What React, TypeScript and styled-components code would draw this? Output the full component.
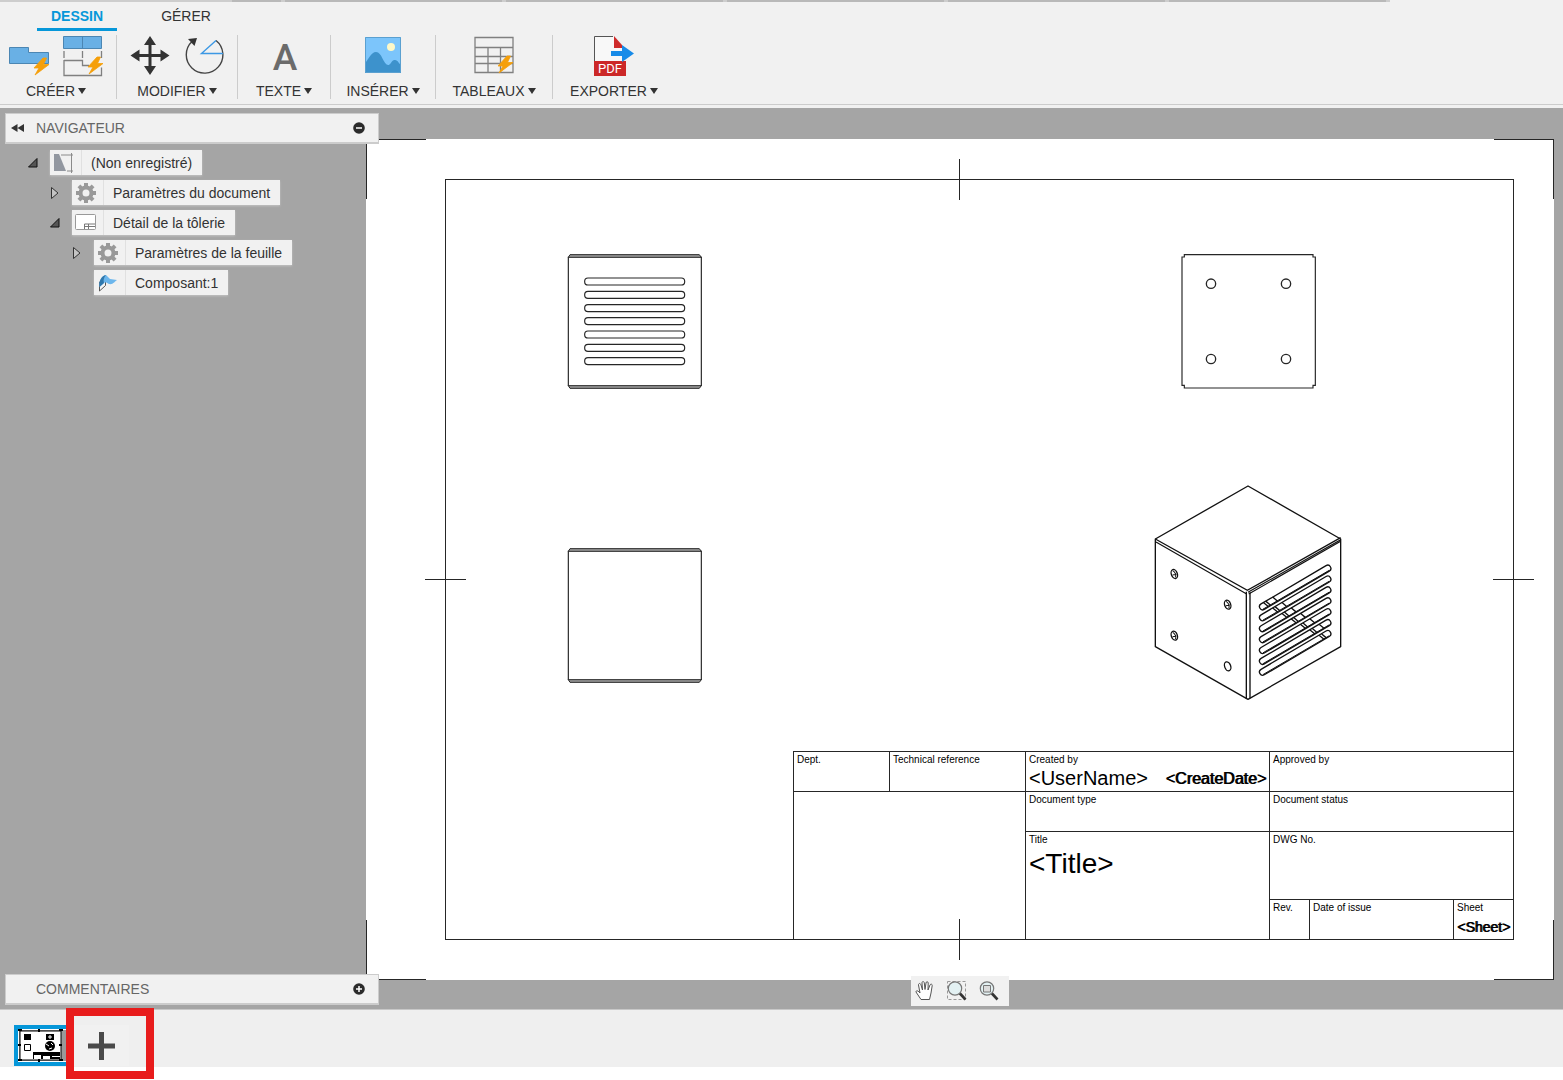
import React from "react";
import styled, { createGlobalStyle, css } from "styled-components";

const INK = "#262626";
const CHROME = "#f1f1f1";
const CANVAS = "#a5a5a5";
const BLUE = "#0697d9";

const GlobalStyle = createGlobalStyle`
  *, *::before, *::after { box-sizing: border-box; }
  body {
    margin: 0;
    background: #fff;
    font-family: "Liberation Sans", Arial, sans-serif;
    font-size: 14px;
    line-height: 20px;
    color: #333;
  }
  button { font: inherit; color: inherit; border: 0; padding: 0; background: none; cursor: pointer; }
  svg { display: block; }
`;

const Page = styled.div`
  display: flex;
  flex-direction: column;
  min-height: 100vh;
  padding-bottom: 13px;
`;

/* ---------- Header ---------- */

const Header = styled.header`
  display: flex;
  flex-direction: column;
  height: 108px;
  background: ${CHROME};
`;

const FileStrip = styled.div`
  display: flex;
  gap: 4px;
  align-self: flex-start;
  height: 2px;
  padding: 0 4px 0 232px;
  background: #cdcdcd;
`;

const FileEdge = styled.span<{ $w: number }>`
  width: ${(p) => p.$w}px;
  background: #b9b9b9;
`;

const Tabs = styled.nav`
  display: flex;
  gap: 30px;
  height: 29px;
  padding-left: 37px;
`;

const Tab = styled.button<{ $active?: boolean }>`
  padding: 4px 14px 2px;
  border-bottom: 3px solid transparent;
  ${(p) =>
    p.$active &&
    css`
      color: ${BLUE};
      font-weight: bold;
      border-bottom-color: ${BLUE};
    `}
`;

const Ribbon = styled.div`
  display: flex;
  height: 74px;
  padding-top: 4px;
  border-bottom: 1px solid #ccc;
`;

const Group = styled.section<{ $w: number; $pad?: number }>`
  display: flex;
  flex-direction: column;
  align-items: center;
  width: ${(p) => p.$w}px;
  height: 64px;
  padding-right: ${(p) => p.$pad ?? 0}px;
  border-right: 1px solid #ccc;
  &:last-child { border-right: 0; }
`;

const Tools = styled.div`
  display: flex;
  flex: none;
  align-items: flex-start;
  gap: 14px;
  height: 46px;
`;

const Menu = styled.button`
  display: flex;
  flex: none;
  align-items: center;
  gap: 3px;
  height: 20px;
  white-space: nowrap;
  &::after {
    content: "";
    border: 4px solid transparent;
    border-top: 6px solid #333;
    border-bottom: 0;
  }
`;

/* ---------- Workspace ---------- */

const Workspace = styled.main`
  display: grid;
  grid-template-columns: 366px 1fr;
  flex: 1;
  background: ${CANVAS};
  border-bottom: 1px solid #c8c8c8;
`;

const Side = styled.aside`
  display: flex;
  flex-direction: column;
  justify-content: space-between;
  padding: 5px 0 4px 5px;
  z-index: 1;
`;

const PanelBar = styled.header`
  display: flex;
  align-items: center;
  width: 374px;
  height: 31px;
  padding: 0 13px 0 5px;
  background: ${CHROME};
  border: 1px solid #ccc;
  border-width: 1px 1px 2px;
  color: #666;
`;

const PanelTitle = styled.h2`
  flex: 1;
  margin: 0;
  font-size: 14px;
  font-weight: normal;
`;

const PanelSlot = styled.span`
  width: 25px;
`;

const Tree = styled.ul`
  display: flex;
  flex-direction: column;
  gap: 5px;
  margin: 0;
  padding: 6px 0 0 23px;
  list-style: none;
`;

const TreeRow = styled.li<{ $level: number }>`
  display: flex;
  align-items: center;
  padding-left: ${(p) => p.$level * 22}px;
`;

const Toggle = styled.span`
  display: flex;
  flex: none;
  width: 22px;
`;

const TreeItem = styled.button`
  display: flex;
  height: 25px;
  background: ${CHROME};
  box-shadow: 0 1px 2px #c4c4c4;
`;

const TreeIcon = styled.span`
  display: flex;
  align-items: center;
  justify-content: center;
  width: 32px;
  height: 25px;
  padding-right: 4px;
  border-right: 1px solid #e0e0e0;
`;

const TreeText = styled.span`
  padding: 3px 10px 2px 9px;
  white-space: nowrap;
`;

const Board = styled.div`
  display: flex;
  position: relative;
  padding: 31px 9px 29px 0;
`;

const Sheet = styled.div`
  display: flex;
  flex: 1;
  position: relative;
  padding: 40px 40px 40px 79px;
  background: #fff;
`;

const Corner = styled.span<{ $v: "top" | "bottom"; $h: "left" | "right" }>`
  position: absolute;
  ${(p) => p.$v}: 0;
  ${(p) => p.$h}: 0;
  width: 60px;
  height: 60px;
  border: 0 solid ${INK};
  border-${(p) => p.$v}-width: 1px;
  border-${(p) => p.$h}-width: 1px;
`;

const CenterMarkV = styled.span<{ $edge: "top" | "bottom" }>`
  position: absolute;
  left: calc(50% - 1px);
  ${(p) => p.$edge}: 20px;
  width: 1px;
  height: 41px;
  background: ${INK};
`;

const CenterMarkH = styled.span<{ $edge: "left" | "right"; $inset: number }>`
  position: absolute;
  top: 440px;
  ${(p) => p.$edge}: ${(p) => p.$inset}px;
  width: 41px;
  height: 1px;
  background: ${INK};
`;

const Frame = styled.div`
  display: flex;
  flex: 1;
  align-items: flex-end;
  justify-content: flex-end;
  border: 1px solid ${INK};
`;

const View = styled.svg<{ $x: number; $y: number }>`
  position: absolute;
  left: ${(p) => p.$x}px;
  top: ${(p) => p.$y}px;
`;

const TitleBlock = styled.div`
  display: grid;
  grid-template-columns: 96px 136px 244px 40px 144px 60px;
  grid-template-rows: 40px 40px 68px 40px;
  color: #000;
`;

const Cell = styled.div<{ $area: string }>`
  grid-area: ${(p) => p.$area};
  padding: 2px 3px;
  border-top: 1px solid ${INK};
  border-left: 1px solid ${INK};
  white-space: nowrap;
`;

const Caption = styled.div`
  font-size: 10px;
  line-height: 12px;
`;

const Values = styled.div`
  display: flex;
  justify-content: space-between;
`;

const Value = styled.span<{ $size: number }>`
  font-size: ${(p) => p.$size}px;
  line-height: ${(p) => (p.$size > 20 ? 36 : 24)}px;
`;

const HeavyValue = styled(Value)`
  display: block;
  padding-top: 1px;
  text-shadow: 1px 0 0 #000;
`;

const ViewBar = styled.div`
  position: absolute;
  bottom: 3px;
  left: calc(50% - 54px);
  display: flex;
  gap: 12px;
  padding: 5px 10px 5px 4px;
  height: 30px;
  background: ${CHROME};
`;

/* ---------- Footer ---------- */

const Footer = styled.footer`
  display: flex;
  align-items: center;
  height: 57px;
  padding: 14px 0 0 14px;
  background: #efefef;
`;

const SheetThumb = styled.button`
  width: 52px;
  height: 41px;
  border: 4px solid ${BLUE};
  border-right-width: 0;
  background: #fff;
`;

const AddSheet = styled.div`
  position: relative;
  display: flex;
  height: 41px;
  &::after {
    content: "";
    position: absolute;
    top: -17px;
    left: 0;
    width: 88px;
    height: 71px;
    border: 8px solid #e81c1c;
    pointer-events: none;
  }
`;

const AddButton = styled.button`
  display: flex;
  align-items: center;
  width: 63px;
  padding-left: 22px;
  background: ${CHROME};
`;

/* ---------- Icons ---------- */

const Bolt = ({ x, y }: { x: number; y: number }) => (
  <path
    transform={`translate(${x} ${y})`}
    d="M9 0 L0 10 H5 L1 17 L15 6.500 H9.500 L12.500 0Z"
    fill="#f59f0a"
    stroke="#f59f0a"
    strokeWidth="0.8"
  />
);

const BaseViewIcon = () => (
  <svg width="40" height="42" viewBox="0 0 40 42">
    <path d="M.5 12.5h19v5h20v11h-39z" fill="#69b0e5" stroke="#4b86b3" />
    <Bolt x={25} y={23} />
  </svg>
);

const ProjectedViewIcon = () => (
  <svg width="40" height="42" viewBox="0 0 40 42">
    <path d="M.5 1.500h38v12h-38zM19.500 1.500v12" fill="#69b0e5" stroke="#4b86b3" />
    <path d="M1 16v7M19.500 16v7M38.500 16v7M1 25.500h18.500v5H26M1 25v15.500h37.500v-8" fill="none" stroke="#808080" strokeWidth="1.300" />
    <Bolt x={25} y={22} />
  </svg>
);

const MoveIcon = () => (
  <svg width="40" height="42" viewBox="0 0 40 42">
    <path
      d="M20 1l6 9h-4.500v9h9v-4.500l9 6-9 6V22h-9v9H26l-6 9-6-9h4.500v-9h-9v4.500l-9-6 9-6V19h9v-9H14z"
      fill="#333"
    />
  </svg>
);

const RotateIcon = () => (
  <svg width="40" height="42" viewBox="0 0 40 42">
    <path d="M32 5.500A18.300 18.300 0 1 1 8 6.500" fill="none" stroke="#444" strokeWidth="1.400" />
    <path d="M32 5.500L17.500 18.500H39" fill="none" stroke="#3c98e4" strokeWidth="1.400" />
    <path d="M4 4l9-1-2.500 8z" fill="#333" />
  </svg>
);

const TextIcon = () => (
  <svg width="40" height="46" viewBox="0 0 40 46">
    <text x="21" y="35" textAnchor="middle" fontFamily="Roboto, sans-serif" fontSize="37" fontWeight="500" fill="#6b6b6b">A</text>
  </svg>
);

const ImageIcon = () => (
  <svg width="36" height="42" viewBox="0 0 36 42">
    <path d="M0 2h36v36H0z" fill="#7cc5fb" />
    <circle cx="26" cy="12" r="4" fill="#fdf8c8" />
    <path d="M0 28c4-4 6-11 11-11 6 0 7 12 12 13 3 0 4-6 7-5 3 0 4 4 6 5v8H0z" fill="#3d92cc" />
    <path d="M.5 2.500h35v35H.5z" fill="none" stroke="#5aa0d0" />
  </svg>
);

const TableIcon = () => (
  <svg width="40" height="42" viewBox="0 0 40 42">
    <path d="M1 2.500h38v35H1zM1 12.500h38M1 21.500h38M1 28.500h38M14 12.500v25M26.500 12.500v25" fill="none" stroke="#808080" strokeWidth="1.300" />
    <Bolt x={24} y={21} />
  </svg>
);

const PdfIcon = () => (
  <svg width="40" height="42" viewBox="0 0 40 42">
    <path d="M.5 26V1.500H19L28 11v15z" fill="#f8f8f8" />
    <path d="M.5 26V1.500H19" fill="none" stroke="#555" />
    <path d="M20 1l8 9v3h-8z" fill="#cf2b2b" />
    <path d="M0 26h32v15H0z" fill="#cc2828" />
    <text x="4" y="38" fontFamily="Roboto, sans-serif" fontSize="13" fill="#fff">PDF</text>
    <path d="M17 16h11v-6l12 8.500L28 27v-6H17z" fill="#188be8" />
  </svg>
);

const CollapseIcon = () => (
  <svg width="14" height="10" viewBox="0 0 14 10">
    <path d="M6.500 1v8L0 5zM13 1v8L6.500 5z" fill="#333" />
  </svg>
);

const RoundIcon = ({ plus }: { plus?: boolean }) => (
  <svg width="12" height="12" viewBox="0 0 12 12">
    <circle cx="6" cy="6" r="5.800" fill="#2b2b2b" />
    <path d={plus ? "M3 6h6M6 3v6" : "M3 6h6"} stroke="#fff" strokeWidth="1.500" />
  </svg>
);

const OpenArrow = () => (
  <svg width="10" height="10" viewBox="0 0 10 10">
    <path d="M9 .5v8.500H.5z" fill="#555" stroke="#111" />
  </svg>
);

const ClosedArrow = () => (
  <svg width="10" height="12" viewBox="0 0 10 12">
    <path d="M1.500 .5v11L8 6z" fill="#c4c4c4" stroke="#333" />
  </svg>
);

const GearIcon = () => (
  <svg width="20" height="20" viewBox="-10 -10 20 20">
    {[0, 45, 90, 135].map((a) => (
      <path key={a} d="M-2-10h4V10h-4z" transform={`rotate(${a})`} fill="#999" />
    ))}
    <circle r="5.500" fill={CHROME} stroke="#999" strokeWidth="4" />
  </svg>
);

const DocIcon = () => (
  <svg width="21" height="20" viewBox="0 0 21 20">
    <path d="M1 1h5l7 17H1z" fill="#9297a0" />
    <path d="M8 2h12M14 18h6M18.500 0v20" stroke="#8b8b8b" fill="none" />
  </svg>
);

const SheetIcon = () => (
  <svg width="21" height="17" viewBox="0 0 21 17">
    <rect x=".5" y=".5" width="20" height="15" rx="1" fill="#fff" stroke="#999" />
    <path d="M9.500 15v-5H20M9.500 12.500H20M13.500 10v5" fill="none" stroke="#777" />
  </svg>
);

const FlangeIcon = () => (
  <svg width="20" height="18" viewBox="0 0 20 18">
    <path d="M1.500 8v9l6-5.500V6z" fill="#f6f6f6" stroke="#555" />
    <path d="M1.500 13C1 7 3 2 8 1l4 4 7 1c-2 1-4 5-8 4-2-1-3-2-5-1z" fill="#6cb6ec" />
    <path d="M1.500 13C1 7 3 2 8 1c-2 2-3 5-2 8z" fill="#2f78ad" />
  </svg>
);

const HandIcon = () => (
  <svg width="20" height="20" viewBox="0 0 20 20">
    <path
      d="M6 18.500L1 11c0-2 2-1.500 4 1L3.500 4c0-2 2-2 2.500 0l1.500 5L7 2c0-2 2-2 2.300 0l.7 6.500L11 2c.2-2 2.300-1.500 2.200 0L13 9l2-5c.7-1.500 2.500-.8 2.200.6L16 12l-1.500 6.500z"
      fill="#fff"
      stroke="#555"
    />
  </svg>
);

const ZoomIcon = ({ fit }: { fit?: boolean }) => (
  <svg width="20" height="20" viewBox="0 0 20 20">
    {!fit && <path d="M.5 .5h18v18H.5z" fill="none" stroke="#999" strokeDasharray="3 2" />}
    <path d="M12.500 12l6 6.500" stroke="#333" strokeWidth="2.600" />
    <circle cx="8" cy="7.500" r="6.700" fill="#e3f1f3" stroke="#777" strokeWidth="1.200" />
    {fit && <path d="M4.500 4.500h7v6.500h-7z" fill="#ddd" stroke="#777" />}
  </svg>
);

const PlusIcon = () => (
  <svg width="27" height="28" viewBox="0 0 27 28">
    <path d="M11 0h5v11.500h11v5H16V28h-5V16.500H0v-5h11z" fill="#4a4a4a" />
  </svg>
);

const ThumbDrawing = () => (
  <svg width="48" height="33" viewBox="0 0 48 33">
    <path d="M1 1h47v31H1z" fill="#999" />
    <path d="M2 2h41v29H2z" fill="#fff" stroke="#000" />
    <path d="M6 5h7v6H6zM28 5h8v6h-8zM15 23h27v7H15z" />
    <path d="M30 8h4M32 6v4" stroke="#fff" />
    <path d="M16 26h7v4h-7zM25 27h7v3h-7zM34 27h8v1h-8z" fill="#fff" />
    <path d="M6.500 15.500h6v6h-6z" fill="#fff" stroke="#000" />
    <circle cx="32" cy="17" r="5" />
    <path d="M28 15l3 2M33 14l2 2M31 20l3-1" stroke="#fff" />
    <path d="M0 1h4M0 31h4M41 1h4M41 31h4M21 0v3M21 30v3M0 16h3M41 16h3" stroke="#000" strokeWidth="2" />
  </svg>
);

/* ---------- Drawing views ---------- */

const BoxView = ({ x, y, slots }: { x: number; y: number; slots?: boolean }) => (
  <View $x={x} $y={y} width="170" height="160" viewBox="0 0 510 480" fill="none" stroke={INK} strokeWidth="3.500">
    <path d="M55 50V438M454 50V438" />
    <path d="M55 52l5-8H448l6 8zM55 437l5 8H448l6-8z" fill="#999" strokeWidth="3" />
    {slots &&
      [125, 165, 205, 244, 284, 324, 364].map((cy) => (
        <rect key={cy} x="104" y={cy - 11} width="300" height="21" rx="10" />
      ))}
  </View>
);

const FlatView = () => (
  <View $x={799} $y={101} width="170" height="160" viewBox="0 0 510 480" fill="none" stroke={INK} strokeWidth="3.500">
    <path d="M58 44H444V51H451V436H444V444H58V436H51V51H58Z" />
    {[131, 357].map((cy) => [138, 363].map((cx) => <circle key={`${cx}-${cy}`} cx={cx} cy={cy} r="14" strokeWidth="4" />))}
  </View>
);

const IsoView = () => (
  <View $x={774} $y={336} width="220" height="235" viewBox="0 0 660 705" fill="none" stroke="#111" strokeWidth="4">
    <path d="M324 33L602 192V515L324 673L46 515V192Z" strokeLinejoin="round" />
    <path d="M46 192L322 346L602 188" />
    <path d="M48 201L320 357M326 357L602 199M324 352L602 194" strokeWidth="3.500" />
    <path d="M319 350V672M330 352V670" />
    {[0, 1, 2, 3, 4, 5, 6].map((i) => {
      const y = 395 + i * 32.700;
      const slot = `M368 ${y}L563 ${y - 115}`;
      const mark = (mx: number) => `M${mx - 5} ${y - (mx - 366) * 0.580 - 6}l12 10`;
      const a = 376 + i * 28;
      return (
        <g key={i} strokeLinecap="round">
          <path d={slot} strokeWidth="23" />
          <path d={slot} strokeWidth="15" stroke="#fff" />
          <path d={`M370 ${y + 7}L566 ${y - 108}`} strokeWidth="3" />
          <path d={mark(a)} strokeWidth="4" />
          <path d={mark(a + 7)} strokeWidth="4" />
          {i < 6 && <path d={mark(a + 28)} strokeWidth="4" />}
        </g>
      );
    })}
    {[[103, 297], [263, 389], [103, 482], [263, 574]].map(([cx, cy], i) => (
      <g key={i} transform={`translate(${cx} ${cy}) rotate(-20)`}>
        <ellipse rx="9" ry="14" />
        {i < 3 && <path d="M-1-11C4-4 4 5 0 11M-6 1l12 2" strokeWidth="3" />}
      </g>
    ))}
  </View>
);

/* ---------- Data ---------- */

const groups = [
  { label: "CRÉER", w: 117, pad: 4, tools: [BaseViewIcon, ProjectedViewIcon] },
  { label: "MODIFIER", w: 121, tools: [MoveIcon, RotateIcon] },
  { label: "TEXTE", w: 93, tools: [TextIcon] },
  { label: "INSÉRER", w: 105, tools: [ImageIcon] },
  { label: "TABLEAUX", w: 117, tools: [TableIcon] },
  { label: "EXPORTER", w: 122, tools: [PdfIcon] },
];

const tree = [
  { text: "(Non enregistré)", level: 0, arrow: OpenArrow, icon: DocIcon },
  { text: "Paramètres du document", level: 1, arrow: ClosedArrow, icon: GearIcon },
  { text: "Détail de la tôlerie", level: 1, arrow: OpenArrow, icon: SheetIcon },
  { text: "Paramètres de la feuille", level: 2, arrow: ClosedArrow, icon: GearIcon },
  { text: "Composant:1", level: 2, arrow: null, icon: FlangeIcon },
];

export default function App() {
  return (
    <Page>
      <GlobalStyle />
      <Header>
        <FileStrip>
          {[49, 217, 217, 217, 217, 217].map((w, i) => (
            <FileEdge key={i} $w={w} />
          ))}
        </FileStrip>
        <Tabs>
          <Tab $active>DESSIN</Tab>
          <Tab>GÉRER</Tab>
        </Tabs>
        <Ribbon>
          {groups.map((g) => (
            <Group key={g.label} $w={g.w} $pad={g.pad}>
              <Tools>
                {g.tools.map((Icon, i) => (
                  <button key={i} aria-label={g.label}>
                    <Icon />
                  </button>
                ))}
              </Tools>
              <Menu>{g.label}</Menu>
            </Group>
          ))}
        </Ribbon>
      </Header>

      <Workspace>
        <Side>
          <div>
            <PanelBar>
              <PanelSlot><CollapseIcon /></PanelSlot>
              <PanelTitle>NAVIGATEUR</PanelTitle>
              <button aria-label="NAVIGATEUR"><RoundIcon /></button>
            </PanelBar>
            <Tree>
              {tree.map(({ text, level, arrow: Arrow, icon: Icon }) => (
                <TreeRow key={text} $level={level}>
                  <Toggle>{Arrow && <Arrow />}</Toggle>
                  <TreeItem>
                    <TreeIcon><Icon /></TreeIcon>
                    <TreeText>{text}</TreeText>
                  </TreeItem>
                </TreeRow>
              ))}
            </Tree>
          </div>
          <PanelBar>
            <PanelSlot />
            <PanelTitle>COMMENTAIRES</PanelTitle>
            <button aria-label="COMMENTAIRES"><RoundIcon plus /></button>
          </PanelBar>
        </Side>

        <Board>
          <Sheet>
            <Corner $v="top" $h="left" />
            <Corner $v="top" $h="right" />
            <Corner $v="bottom" $h="left" />
            <Corner $v="bottom" $h="right" />
            <CenterMarkV $edge="top" />
            <CenterMarkV $edge="bottom" />
            <CenterMarkH $edge="left" $inset={59} />
            <CenterMarkH $edge="right" $inset={20} />
            <BoxView x={184} y={101} slots />
            <BoxView x={184} y={395} />
            <FlatView />
            <IsoView />
            <Frame>
              <TitleBlock>
                <Cell $area="1 / 1"><Caption>Dept.</Caption></Cell>
                <Cell $area="1 / 2"><Caption>Technical reference</Caption></Cell>
                <Cell $area="1 / 3">
                  <Caption>Created by</Caption>
                  <Values>
                    <Value $size={20}>&lt;UserName&gt;</Value>
                    <HeavyValue $size={16}>&lt;CreateDate&gt;</HeavyValue>
                  </Values>
                </Cell>
                <Cell $area="1 / 4 / 2 / 7"><Caption>Approved by</Caption></Cell>
                <Cell $area="2 / 1 / 5 / 3" />
                <Cell $area="2 / 3"><Caption>Document type</Caption></Cell>
                <Cell $area="2 / 4 / 3 / 7"><Caption>Document status</Caption></Cell>
                <Cell $area="3 / 3 / 5 / 4">
                  <Caption>Title</Caption>
                  <Value $size={28}>&lt;Title&gt;</Value>
                </Cell>
                <Cell $area="3 / 4 / 4 / 7"><Caption>DWG No.</Caption></Cell>
                <Cell $area="4 / 4"><Caption>Rev.</Caption></Cell>
                <Cell $area="4 / 5"><Caption>Date of issue</Caption></Cell>
                <Cell $area="4 / 6">
                  <Caption>Sheet</Caption>
                  <HeavyValue $size={14}>&lt;Sheet&gt;</HeavyValue>
                </Cell>
              </TitleBlock>
            </Frame>
          </Sheet>
          <ViewBar>
            <button aria-label="Pan"><HandIcon /></button>
            <button aria-label="Zoom"><ZoomIcon /></button>
            <button aria-label="Fit"><ZoomIcon fit /></button>
          </ViewBar>
        </Board>
      </Workspace>

      <Footer>
        <SheetThumb aria-label="Sheet"><ThumbDrawing /></SheetThumb>
        <AddSheet>
          <AddButton aria-label="Add"><PlusIcon /></AddButton>
        </AddSheet>
      </Footer>
    </Page>
  );
}
